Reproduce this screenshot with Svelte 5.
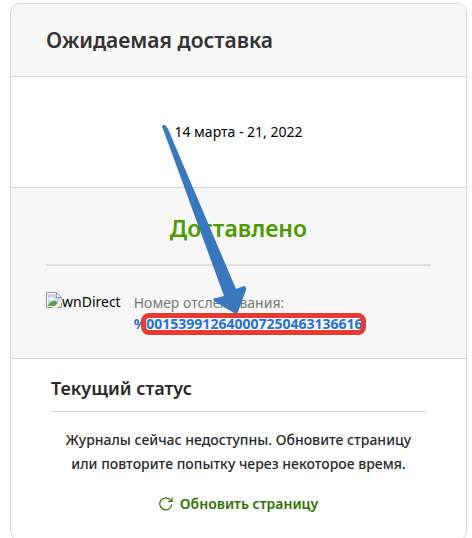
<script lang="ts">
  // Delivery card: expected date, parcel state with tracking number, and the
  // current status log. The tracking number is marked with a frame and arrow.
  const delivery = {
    expected: '14 марта - 21, 2022',
    state: 'Доставлено',
    carrier: 'wnDirect',
    tracking: '001539912640007250463136616',
  };
</script>

<main class="card">
  <header class="head">
    <h1>Ожидаемая доставка</h1>
  </header>

  <section class="date">{delivery.expected}</section>

  <section class="parcel">
    <h2>{delivery.state}</h2>
    <div class="shipment">
      <div class="carrier">
        <svg width="16" height="16" viewBox="0 0 16 16" aria-hidden="true">
          <path d="M.5.5h10l5 5v10H.5z" fill="#fff" />
          <path d="M2 2h8v4h4v8H2z" fill="#c3d5f5" />
          <path d="M3 7c0-2 2-3 3-1 2-1 3 0 3 2H3z" fill="#fff" />
          <path d="M2 14c1-4 7-7 10-3l-3 3z" fill="#55a83c" />
          <path d="M7 16 16 7v3l-6 6z" fill="#f7f7f7" />
          <path d="M7 15.5H.5V.5h10l5 5V7M15.5 11v4.5H11M10.5.5v5h5" fill="none" stroke="#919191" />
        </svg>
        <span>{delivery.carrier}</span>
      </div>
      <div class="tracking">
        <span class="label">Номер отслеживания:</span>
        <a href="#tracking">%<span class="number">{delivery.tracking}<svg
              class="arrow"
              width="86"
              height="192"
              viewBox="0 0 86 192"
              aria-hidden="true"
            >
            <path
              d="M0 4Q1 0 4 3L6 6 74 166 82 163Q85 164 84 167L76 189Q75 192 72 190L52 178Q50 175 54 175L62 173 1 6Z"
              fill="#3978bd"
            />
          </svg></span></a>
      </div>
    </div>
  </section>

  <section class="status">
    <h3>Текущий статус</h3>
    <p>Журналы сейчас недоступны. Обновите страницу или повторите попытку через некоторое время.</p>
    <button type="button">
      <svg width="14" height="14" viewBox="0 0 14 14" aria-hidden="true">
        <path d="M12.8 7.4A6 6 0 1 1 11.6 3.2L12.6 4.4M13 .5v4H9" fill="none" stroke="currentColor" stroke-width="1.2" />
      </svg>
      Обновить страницу
    </button>
  </section>
</main>

<style>
  :global(body) {
    background: #fff;
    overflow: hidden;
  }
  .card {
    margin: 3px 5px 0 10px;
    border: 1px solid #d5d5d5;
    border-radius: 10px;
    font: 14px/20px "Noto Sans", sans-serif;
    color: #000;
  }
  h1,
  h2,
  h3,
  p {
    margin: 0;
    font-weight: 600;
  }
  .head {
    padding: 22px 35px;
    border-bottom: 1px solid #d5d5d5;
    border-radius: 9px 9px 0 0;
    background: #f7f7f7;
  }
  h1 {
    font-size: 21px;
    line-height: 28px;
    color: #333;
  }
  .date {
    padding: 45px 35px;
    text-align: center;
  }
  .parcel {
    padding: 24px 35px;
    border: solid #d5d5d5;
    border-width: 1px 0;
    background: #f7f7f7;
  }
  h2 {
    padding-bottom: 20px;
    border-bottom: 2px solid #ddd;
    font-size: 23px;
    line-height: 32px;
    text-align: center;
    color: #4c9a00;
  }
  .shipment {
    display: flex;
    gap: 13px;
    padding-top: 26px;
  }
  .carrier {
    display: flex;
  }
  .tracking {
    display: flex;
    flex-direction: column;
    line-height: 21px;
  }
  .label {
    color: #767676;
  }
  a {
    font-weight: bold;
    color: #2573d5;
    text-decoration: none;
  }
  .number {
    position: relative;
  }
  /* frame drawn over the link */
  .number::after {
    content: "";
    position: absolute;
    inset: -1px -3px -2px -5px;
    border: 5px solid #e63b2e;
    border-radius: 8px;
  }
  .arrow {
    position: absolute;
    z-index: 1;
    left: 16px;
    bottom: 18px;
  }
  .status {
    padding: 16px 40px 20px;
    text-align: center;
    color: #292929;
  }
  h3 {
    padding-bottom: 10px;
    border-bottom: 1px solid #d5d5d5;
    font-size: 18px;
    line-height: 26px;
    text-align: left;
  }
  p {
    padding: 16px 0 12px;
    font-weight: 500;
    line-height: 24px;
  }
  button {
    display: inline-flex;
    align-items: center;
    gap: 7px;
    padding: 0;
    border: 0;
    background: none;
    font: 600 14px/32px "Noto Sans", sans-serif;
    color: #2c7300;
  }
</style>
